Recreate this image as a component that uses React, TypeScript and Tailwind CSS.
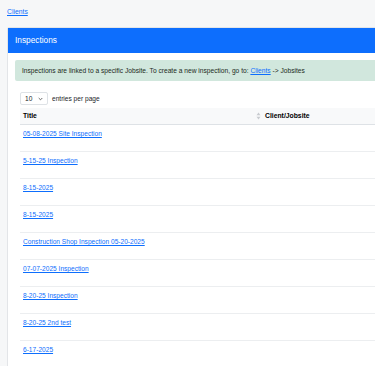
const rows = [
  '05-08-2025 Site Inspection',
  '5-15-25 Inspection',
  '8-15-2025',
  '8-15-2025',
  'Construction Shop Inspection 05-20-2025',
  '07-07-2025 Inspection',
  '8-20-25 Inspection',
  '8-20-25 2nd test',
  '6-17-2025',
];

function SortIcon() {
  return (
    <svg width="5" height="8" viewBox="0 0 5 8" className="shrink-0">
      <path d="M2.5 0.5 L4.5 3.2 L0.5 3.2 Z" fill="#c8cbcf" />
      <path d="M2.5 7.5 L4.5 4.8 L0.5 4.8 Z" fill="#c8cbcf" />
    </svg>
  );
}

export default function App() {
  return (
    <div
      className="h-[366px] w-[375px] overflow-hidden bg-[#f6f7f8] text-[#212529]"
      style={{ fontFamily: '"Liberation Sans", Arial, sans-serif' }}
    >
      <div className="flex h-[27px] items-start pl-[7px] pt-[7px] leading-[10px]">
        <a href="#" className="text-[6.8px] text-[#0d6efd] underline">
          Clients
        </a>
      </div>

      <div className="ml-[7px] w-[420px] rounded-tl-[2px] border border-[#e3e5e8] bg-white">
        <div className="flex h-[25px] items-center bg-[#0d6efd] pl-[7px] text-[8.3px] text-white">
          Inspections
        </div>

        <div className="px-[7px] pt-[7px]">
          <div className="flex h-[21px] items-center rounded-[2px] bg-[#d1e7dd] pl-[7px] text-[6.65px] text-[#1c2a22]">
            Inspections are linked to a specific Jobsite. To create a new inspection, go to:&nbsp;
            <a href="#" className="text-[#0d6efd] underline">
              Clients
            </a>
            &nbsp;-&gt; Jobsites
          </div>

          <div className="px-[5px]">
            <div className="mt-[11px] flex items-center gap-[4px]">
              <div className="flex h-[13px] w-[28px] items-center justify-between rounded-[2px] border border-[#dee2e6] bg-white px-[4px] text-[6.6px]">
                <span>10</span>
                <svg width="5" height="4" viewBox="0 0 5 4">
                  <path d="M0.7 1 L2.5 2.8 L4.3 1" fill="none" stroke="#444" strokeWidth="0.8" />
                </svg>
              </div>
              <span className="text-[6.6px]">entries per page</span>
            </div>

            <div className="mt-[3px] flex h-[17px] items-center border-b border-[#dee2e6] bg-[#f8f9fa] text-[6.8px] font-bold text-black">
              <div className="flex w-[243px] items-center justify-between pl-[3px] pr-[2px]">
                <span>Title</span>
                <SortIcon />
              </div>
              <div className="pl-[2px]">Client/Jobsite</div>
            </div>

            {rows.map((r, i) => (
              <div key={i} className="h-[27px] border-b border-[#eceef0] pl-[3px] pt-[4px] text-[6.6px] leading-[9px]">
                <a href="#" className="text-[#0d6efd] underline">
                  {r}
                </a>
              </div>
            ))}
          </div>
        </div>
      </div>
    </div>
  );
}
